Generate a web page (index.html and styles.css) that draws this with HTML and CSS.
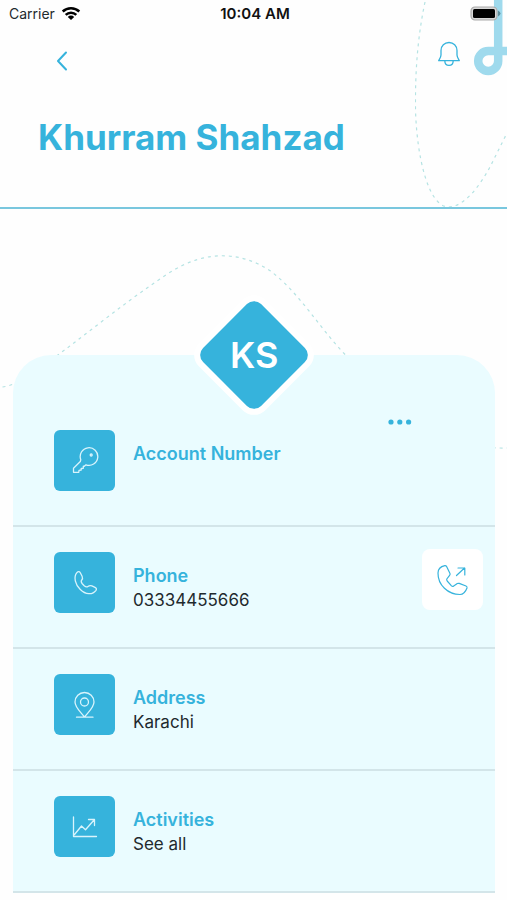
FILE: index.html
```html
<!DOCTYPE html>
<html lang="en">
<head>
<meta charset="utf-8">
<meta name="viewport" content="width=device-width, initial-scale=1">
<title>Khurram Shahzad</title>
<link rel="stylesheet" href="styles.css">
</head>
<body>
<div class="app">
  <svg class="trail trail-top" width="92" height="210" viewBox="0 0 92 210" fill="none" aria-hidden="true">
    <path class="dash" d="M10 2C3 35 0 70 0.500 110C2 160 14 206 33 207C50 207 65 185 75 167L92 133"/>
    <path class="ribbon" d="M83.200 0V61A10 10 0 1 1 73.200 51H92"/>
  </svg>
  <svg class="trail trail-mid" width="507" height="220" viewBox="0 0 507 220" fill="none" aria-hidden="true">
    <path class="dash" d="M2 147C22 144 40 128 60 113C95 87 130 58 170 32C205 10 240 11 270 31C300 54 318 87 346 116C390 165 440 210 507 208"/>
  </svg>

  <header class="header">
    <div class="status">
      <span class="carrier">Carrier
        <svg width="20" height="15" viewBox="0 0 20 15" fill="none" stroke="#000" stroke-width="2.500" aria-hidden="true">
          <path d="M1.700 5.500A12 12 0 0 1 18.300 5.500M4.700 8.800A7.600 7.600 0 0 1 15.300 8.800"/>
          <path d="M10 14L6.800 10.900A4.500 4.500 0 0 1 13.200 10.900Z" fill="#000" stroke="none"/>
        </svg>
      </span>
      <time class="clock">10:04 AM</time>
      <svg class="battery" width="31" height="15" viewBox="0 0 31 15" aria-hidden="true">
        <rect x="1" y="1" width="26" height="13" rx="4" fill="#d8d8d8" stroke="#a9a9a9" stroke-width="1.200"/>
        <rect x="3" y="3" width="22" height="9" rx="1.500" fill="#000"/>
        <path d="M28 4.500Q30.500 6 30.500 7.500Q30.500 9 28 10.500Z" fill="#5f8f9d"/>
      </svg>
    </div>
    <nav class="toolbar">
      <button class="icon-button" type="button" aria-label="Back">
        <svg width="12" height="20" viewBox="0 0 12 20" fill="none" stroke="currentColor" stroke-width="2" stroke-linecap="round" stroke-linejoin="round"><path d="M10 1.500L2 10L10 18.500"/></svg>
      </button>
      <button class="icon-button bell" type="button" aria-label="Notifications">
        <svg width="24" height="26" viewBox="0 0 24 26" fill="none" stroke="currentColor" stroke-width="1.300" stroke-linejoin="round"><path d="M4 14V9.500C4 5 7.500 1.500 12 1.500S20 5 20 9.500V14C20 16 21 17.500 22.300 19.700H1.700C3 17.500 4 16 4 14ZM7.800 19.700C7.800 22.500 9.500 24.300 12 24.300S16.200 22.500 16.200 19.700"/></svg>
      </button>
    </nav>
    <h1 class="name">Khurram Shahzad</h1>
  </header>

  <main class="card">
    <div class="avatar"><span class="initials">KS</span></div>
    <button class="more" type="button" aria-label="More options">
      <svg width="24" height="6" viewBox="0 0 24 6" fill="currentColor"><circle cx="3" cy="3" r="2.600"/><circle cx="11.800" cy="3" r="2.600"/><circle cx="20.600" cy="3" r="2.600"/></svg>
    </button>

    <section class="row row-first">
      <div class="tile">
        <svg width="28" height="28" viewBox="0 0 28 28"><path d="M9.800 12.700A8.800 8.800 0 1 1 15 17.800L13.300 19.300L12.300 19.200V21.300L10.200 21.500V23L8 23.300L7.800 25.300H2.500V21.300L9.300 14.500Z"/><circle cx="20.200" cy="8" r="1"/></svg>
      </div>
      <div class="info"><h2 class="label">Account Number</h2></div>
    </section>

    <section class="row">
      <div class="tile">
        <svg width="28" height="28" viewBox="0 0 28 28"><path d="M9.300 3.700L11.100 7.200C11.800 8.800 11.700 10 10.600 11.200C9.800 12.300 10 13.200 11.300 14.700L13.200 16.700C14.700 18 15.800 18.300 16.900 17.500C18.300 16.500 19.500 16.300 20.900 16.900L24 18.300C25.500 19 25.800 20.100 25 21.300C21.500 26.200 14.500 25.700 9.300 20.500S2.300 8.100 5.900 3.700C7 2.300 8.500 2.200 9.300 3.700Z"/></svg>
      </div>
      <div class="info"><h2 class="label">Phone</h2><p class="value">03334455666</p></div>
      <button class="call" type="button" aria-label="Call">
        <svg width="34" height="34" viewBox="0 0 34 34" fill="none" stroke="currentColor" stroke-width="1.200" stroke-linejoin="round" stroke-linecap="round"><path d="M10.600 3.500L14 10.500C14.300 11.400 14 12 13.400 12.700L10.800 16C10.500 16.800 10.700 17.300 11.200 18L15.500 22.800C16.200 23.500 16.900 23.600 17.700 23L21.300 20.600C22 20.200 22.500 20.200 23.200 20.400L30 23C31 23.500 31.300 24 31 25C29.500 29 27.500 31.500 24 31.500C12 31.500 1.800 22 2 10C2 6 4.800 3.500 8.800 2.600C9.700 2.500 10.200 2.700 10.600 3.500Z"/><path d="M20.500 12.500L28.500 5M22 5H28.800V12"/></svg>
      </button>
    </section>

    <section class="row">
      <div class="tile">
        <svg width="28" height="28" viewBox="0 0 28 28"><path d="M13.500 26C10 21.500 4 16.500 4 11A9.500 9.500 0 0 1 23 11C23 16.500 17 21.500 13.500 26ZM5.500 26.200H22"/><circle cx="13.500" cy="11" r="4"/></svg>
      </div>
      <div class="info"><h2 class="label">Address</h2><p class="value">Karachi</p></div>
    </section>

    <section class="row">
      <div class="tile">
        <svg width="28" height="28" viewBox="0 0 28 28"><path d="M2.500 4V23.500H25.500M3.500 21.500L10.500 13L14.500 16.800L23.500 6.500M17.500 6.500H23.500V12.500"/></svg>
      </div>
      <div class="info"><h2 class="label">Activities</h2><a class="value" href="#activities">See all</a></div>
    </section>
  </main>
</div>
</body>
</html>
```
FILE: styles.css
```css
* {
  box-sizing: border-box;
}

body {
  margin: 0;
  background: #fefefe;
  color: #1f2a2e;
  font-family: Inter, "Liberation Sans", sans-serif;
}

h1, h2, p {
  margin: 0;
}

button {
  display: grid;
  place-items: center;
  padding: 0;
  border: 0;
  background: none;
  color: #36b3dc;
}

svg {
  display: block;
}

.app {
  position: relative;
  min-height: 900px;
  overflow: hidden;
}

.trail {
  position: absolute;
}

.trail-top {
  top: 0;
  right: 0;
}

.trail-mid {
  top: 240px;
  left: 50%;
  transform: translateX(-50%);
}

.dash {
  stroke: #b5e3e3;
  stroke-width: 1.2;
  stroke-dasharray: 3 4;
}

.ribbon {
  stroke: #9fdaed;
  stroke-width: 8.5;
}

.header {
  position: relative;
  height: 209px;
  border-bottom: 2px solid #79c7de;
}

.status {
  display: grid;
  grid-template-columns: 1fr auto 1fr;
  align-items: center;
  height: 27px;
  padding: 0 6px 0 9px;
  font-size: 14px;
}

.carrier {
  display: flex;
  align-items: center;
  gap: 6px;
}

.clock {
  color: #111;
  font-size: 15px;
  font-weight: 600;
}

.battery {
  justify-self: end;
}

.toolbar {
  display: flex;
  justify-content: space-between;
  align-items: flex-start;
  height: 61px;
  padding: 7px 38px 0 42px;
}

.icon-button {
  width: 40px;
  height: 40px;
}

.toolbar .icon-button:first-child {
  height: 54px;
}

.name {
  padding-left: 38px;
  margin-top: 28px;
  color: #36b3dc;
  font-size: 35px;
  font-weight: 700;
  line-height: 42px;
}

.card {
  position: relative;
  margin: 146px 12px 0 13px;
  border-radius: 38px 38px 0 0;
  background: #eafcff;
}

.avatar {
  position: absolute;
  top: -41px;
  left: 50%;
  display: grid;
  place-items: center;
  width: 82px;
  height: 82px;
  margin-left: -41px;
  border-radius: 10px;
  background: #36b3dc;
  box-shadow: 0 0 0 6px #fff;
  transform: rotate(45deg);
}

.initials {
  color: #fff;
  font-size: 36px;
  font-weight: 600;
  transform: rotate(-45deg);
}

.more {
  position: absolute;
  top: 56px;
  right: 79px;
  width: 32px;
  height: 22px;
}

.row {
  display: flex;
  align-items: flex-start;
  gap: 18px;
  padding: 25px 12px 34px 41px;
  border-bottom: 2px solid #d3e5e9;
}

.row-first {
  padding-top: 75px;
}

.tile {
  display: grid;
  flex: none;
  place-items: center;
  width: 61px;
  height: 61px;
  border-radius: 6px;
  background: #36b3dc;
}

.tile svg {
  fill: none;
  stroke: #d9f4fc;
  stroke-width: 1.3;
  stroke-linejoin: round;
  stroke-linecap: round;
}

.info {
  display: flex;
  flex: 1;
  flex-direction: column;
  padding-top: 11px;
}

.label {
  color: #36b3dc;
  font-size: 18px;
  font-weight: 600;
  line-height: 25px;
}

.value {
  color: #1f2a2e;
  font-size: 17px;
  line-height: 25px;
  text-decoration: none;
}

.call {
  width: 61px;
  height: 61px;
  margin-top: -3px;
  border-radius: 8px;
  background: #fff;
}
```
